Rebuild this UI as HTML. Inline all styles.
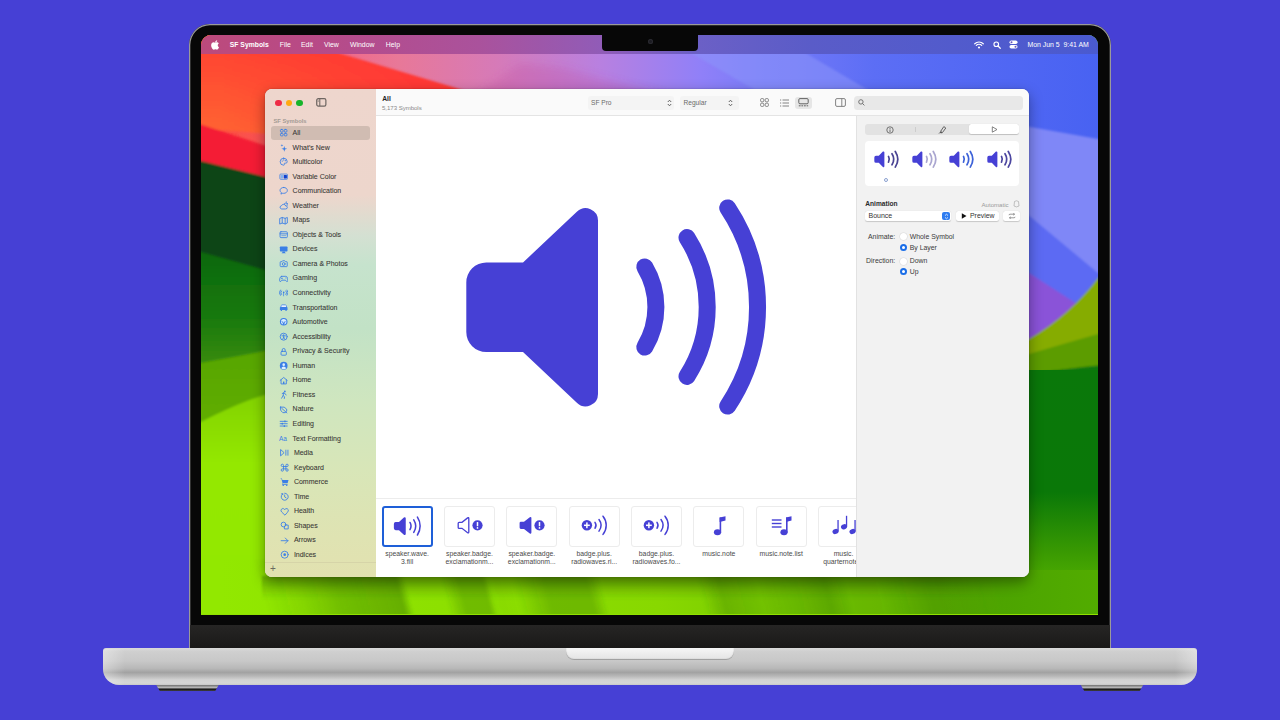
<!DOCTYPE html>
<html><head><meta charset="utf-8">
<style>
*{box-sizing:border-box;margin:0;padding:0}
html,body{width:1280px;height:720px;overflow:hidden}
body{background:#4640d5;position:relative;font-family:"Liberation Sans",sans-serif}
.abs{position:absolute}
#lid{left:189px;top:23.8px;width:922px;height:625.2px;border-radius:21px 21px 0 0;background:#070707;box-shadow:inset 0 0 0 1.3px #9a9a9a}
#screen{left:201px;top:35.4px;width:897px;height:579.2px;border-radius:10px 10px 0 0;overflow:hidden;background:#8fe000}
#chin{left:190px;top:625.4px;width:920px;height:22.6px;background:linear-gradient(#262524,#1a1918)}
#notch{left:602px;top:35px;width:96px;height:16px;background:#070707;border-radius:0 0 4px 4px}
#base{left:103px;top:648px;width:1094px;height:37px;border-radius:3px 3px 16px 16px;
 background:linear-gradient(#dadada 0%,#cfcfcf 10%,#c8c8c8 35%,#b8b8b8 55%,#a2a2a2 66%,#b8b8b8 76%,#d2d2d2 86%,#d6d6d6 95%,#c8c8c8 100%)}
#cut{left:566px;top:648px;width:168px;height:12px;border-radius:0 0 8px 8px;background:linear-gradient(#f6f6f6,#e3e3e3);box-shadow:inset 0 -1px 1px #9a9a9a}
.foot{top:684.6px;width:63px;height:6.3px;clip-path:polygon(0 0,100% 0,94% 100%,6% 100%);background:linear-gradient(#707070 0%,#9a9a9a 25%,#bdbdbd 40%,#6a6a6a 55%,#1c1c1c 75%,#2a2a2a 90%,#777 100%)}
#menubar{left:0;top:0;width:897px;height:18px;color:#fff;font-size:7.2px}
#win{left:64px;top:54px;width:764px;height:488px;border-radius:7px;overflow:hidden;background:#fff;box-shadow:0 5px 14px rgba(0,0,0,.38),0 0 1.5px rgba(0,0,0,.3)}

#win *{position:absolute}
#side{left:0;top:0;width:111px;height:488px;background:linear-gradient(180deg,#eed6cd 0%,#edd6cc 21.7%,#d4e0d2 30%,#c6e3cd 36%,#c2e2c6 49%,#cfe6bf 64%,#d8e6b8 78%,#dfe3b2 92%,#e2e1b0 100%)}
.tl{top:10.4px;width:6.6px;height:6.6px;border-radius:50%}
.si{left:0;width:111px;height:12px;font-size:7px;color:#3a3836;-webkit-text-stroke:0.08px #3a3836;line-height:12px;white-space:nowrap}
#tb{left:111px;top:0;width:653px;height:27px;background:#fafafa;border-bottom:1px solid #e4e4e4}
#main{left:111px;top:27px;width:480px;height:461px;background:#fff}
#insp{left:591px;top:27px;width:173px;height:461px;background:#f2f2f2;border-left:1px solid #e2e2e2}
.tile{top:7px;width:51px;height:40.6px;border:1px solid #ececec;border-radius:3px;background:#fff}
.lbl{top:50.5px;width:62px;font-size:6.85px;line-height:8.5px;color:#4a4a4a;text-align:center;white-space:nowrap}
</style></head>
<body>
<svg width="0" height="0" style="position:absolute"><defs>
<symbol id="spk" viewBox="460 195 315 222">
<path d="M466.3 282.5A20 20 0 0 1 486.3 262.5L523 262.5L577.1 211.6A12.4 12.4 0 0 1 598 220.6L598 393.9A12.4 12.4 0 0 1 577.1 402.9L523 352L486.3 352A20 20 0 0 1 466.3 332Z"/>
<g fill="none" stroke-linecap="round" stroke-width="17" stroke="currentColor">
<path d="M644.8 266.9A78 78 0 0 1 644.8 347.1"/>
<path d="M687 237.6A129.3 129.3 0 0 1 687 376.4"/>
<path d="M727.7 207.9A179.5 179.5 0 0 1 727.7 406.1"/>
</g></symbol>
<symbol id="spk2" viewBox="460 195 315 222">
<path d="M476 285A20 20 0 0 1 496 265L530 265L580 214A12.4 12.4 0 0 1 598 222.6L598 391.9A12.4 12.4 0 0 1 580 400.9L530 350L496 350A20 20 0 0 1 476 330Z"/>
<g fill="none" stroke-linecap="round" stroke-width="21" stroke="currentColor">
<path d="M648 272A72 72 0 0 1 648 342"/>
<path d="M690 240A125 125 0 0 1 690 374"/>
<path d="M730 212A175 175 0 0 1 730 402"/>
</g></symbol>
</defs></svg>
<div id="lid" class="abs"></div>
<div id="chin" class="abs"></div>
<div id="screen" class="abs">
  <svg class="abs" style="left:0;top:0" width="897" height="579" viewBox="201 35 897 579">
    <defs>
      <filter id="b6" x="-20%" y="-20%" width="140%" height="140%"><feGaussianBlur stdDeviation="6"/></filter>
    </defs>
    <defs>
      <linearGradient id="sky" x1="201" y1="0" x2="1098" y2="0" gradientUnits="userSpaceOnUse">
        <stop offset="0" stop-color="#ff4a32"/>
        <stop offset="0.15" stop-color="#f06888"/>
        <stop offset="0.22" stop-color="#e87898"/>
        <stop offset="0.33" stop-color="#d67ab8"/>
        <stop offset="0.445" stop-color="#b880e0"/>
        <stop offset="0.557" stop-color="#9080f8"/>
        <stop offset="0.62" stop-color="#7a7cf8"/>
        <stop offset="0.75" stop-color="#5c6ef5"/>
        <stop offset="1" stop-color="#4862f2"/>
      </linearGradient>
      <linearGradient id="orange" x1="0" y1="35" x2="0" y2="150" gradientUnits="userSpaceOnUse">
        <stop offset="0" stop-color="#ff3f32"/>
        <stop offset="1" stop-color="#ff6a30"/>
      </linearGradient>
      <linearGradient id="leftgreen" x1="0" y1="160" x2="0" y2="614" gradientUnits="userSpaceOnUse">
        <stop offset="0" stop-color="#0a4616"/>
        <stop offset="0.2" stop-color="#0b4a12"/>
        <stop offset="0.21" stop-color="#0a6c0c"/>
        <stop offset="0.38" stop-color="#2a8608"/>
        <stop offset="0.45" stop-color="#4a9c04"/>
        <stop offset="0.58" stop-color="#66b800"/>
        <stop offset="0.62" stop-color="#8ade00"/>
        <stop offset="1" stop-color="#94ea00"/>
      </linearGradient>
      <linearGradient id="lg2" x1="0" y1="252" x2="0" y2="365" gradientUnits="userSpaceOnUse">
        <stop offset="0" stop-color="#0a680c"/>
        <stop offset="0.6" stop-color="#1a7a0a"/>
        <stop offset="1" stop-color="#3a8c08"/>
      </linearGradient>
      <linearGradient id="lg3" x1="0" y1="355" x2="0" y2="425" gradientUnits="userSpaceOnUse">
        <stop offset="0" stop-color="#58a604"/>
        <stop offset="1" stop-color="#60ae00"/>
      </linearGradient>
      <linearGradient id="lg4" x1="0" y1="400" x2="0" y2="614" gradientUnits="userSpaceOnUse">
        <stop offset="0" stop-color="#84d400"/>
        <stop offset="0.3" stop-color="#94e800"/>
        <stop offset="1" stop-color="#92e800"/>
      </linearGradient>
      <linearGradient id="rfade" x1="940" y1="0" x2="1100" y2="0" gradientUnits="userSpaceOnUse">
        <stop offset="0" stop-color="#4ea600" stop-opacity="0"/>
        <stop offset="0.55" stop-color="#4ea600" stop-opacity="1"/>
        <stop offset="1" stop-color="#52ac00" stop-opacity="1"/>
      </linearGradient>
      <linearGradient id="redov" x1="220" y1="0" x2="420" y2="0" gradientUnits="userSpaceOnUse">
        <stop offset="0" stop-color="#ff3034" stop-opacity="0"/>
        <stop offset="1" stop-color="#ff3038" stop-opacity="0.75"/>
      </linearGradient>
      <linearGradient id="rightgreen" x1="0" y1="370" x2="0" y2="614" gradientUnits="userSpaceOnUse">
        <stop offset="0" stop-color="#0a780a"/>
        <stop offset="0.5" stop-color="#0a7808"/>
        <stop offset="0.75" stop-color="#3a9a02"/>
        <stop offset="1" stop-color="#62c000"/>
      </linearGradient>
      <linearGradient id="botgreen" x1="0" y1="0" x2="1098" y2="0" gradientUnits="userSpaceOnUse">
        <stop offset="0.2" stop-color="#92e800"/>
        <stop offset="0.6" stop-color="#88d800"/>
        <stop offset="0.8" stop-color="#6cc000"/>
        <stop offset="0.937" stop-color="#50aa00"/>
        <stop offset="1" stop-color="#50a800"/>
      </linearGradient>
      <filter id="b1" x="-10%" y="-10%" width="120%" height="120%"><feGaussianBlur stdDeviation="1"/></filter>
      <filter id="b4" x="-10%" y="-10%" width="120%" height="120%"><feGaussianBlur stdDeviation="5"/></filter>
    </defs>
    <rect x="201" y="35" width="897" height="579" fill="url(#botgreen)"/>
    <rect x="201" y="35" width="897" height="300" fill="url(#sky)"/>
    <g filter="url(#b1)">
      <polygon points="660,35 775,35 885,100 772,100" fill="#8a94fa" opacity="0.55"/>
      <polygon points="470,100 520,64 560,68 680,100" fill="#c04898" opacity="0.25" filter="url(#b4)"/>
      <polygon points="150,20 277,20 341,53.7 455,87.7 700,170 150,124" fill="url(#orange)"/>
      <polygon points="150,20 277,20 341,53.7 455,87.7 700,170 150,170" fill="url(#redov)"/>
      <polygon points="150,115 201,124.4 265,145.6 500,220 500,260 150,150" fill="#f41c36"/>
      <polygon points="150,150 201,161 265,176.7 600,260 600,700 150,700" fill="#0a4414"/>
      <polygon points="150,238 201,252 265,270 600,364 600,700 150,700" fill="url(#lg2)"/>
      <polygon points="150,372 201,363 265,351 400,330 400,700 150,700" fill="url(#lg3)"/>
      <path d="M150,440 L201,422 Q240,402 265,395 L400,360 L400,700 L150,700 Z" fill="url(#lg4)"/>
      <!-- right side -->
      <polygon points="960,100 1029,126.7 1098,138.9 1120,140 1120,700 960,700" fill="#7f87f7"/>
      <polygon points="960,190 1029,215.6 1098,273 1120,290 1120,700 960,700" fill="#5b6af3"/>
      <polygon points="960,240 1029,273 1077,304 1120,330 1120,700 960,700" fill="#8a52d8"/>
      <path d="M960,360 L1029,339 Q1070,315 1098,278 L1120,250 L1120,700 L960,700 Z" fill="#86ac04"/>
      <path d="M960,362 L1029,354 Q1070,342 1098,334 L1120,330 L1120,700 L960,700 Z" fill="#5c9c02"/>
      <path d="M960,380 L1029,374 Q1070,368 1098,365.5 L1120,365 L1120,700 L960,700 Z" fill="url(#rightgreen)"/>
    </g>
    <rect x="150" y="560" width="880" height="60" fill="url(#botgreen)"/>
    <defs><linearGradient id="streaks" x1="150" y1="0" x2="1150" y2="0" gradientUnits="userSpaceOnUse" gradientTransform="translate(-159,0) skewX(15)">
        <stop offset="0.0510" stop-color="#2f6a00" stop-opacity="0"/>
        <stop offset="0.1120" stop-color="#2f6a00" stop-opacity="0"/>
        <stop offset="0.1500" stop-color="#2f6a00" stop-opacity="0.12"/>
        <stop offset="0.1870" stop-color="#2f6a00" stop-opacity="0.3"/>
        <stop offset="0.2500" stop-color="#2f6a00" stop-opacity="0.42"/>
        <stop offset="0.2590" stop-color="#2f6a00" stop-opacity="0"/>
        <stop offset="0.2940" stop-color="#2f6a00" stop-opacity="0"/>
        <stop offset="0.3120" stop-color="#2f6a00" stop-opacity="0.3"/>
        <stop offset="0.3360" stop-color="#2f6a00" stop-opacity="0.3"/>
        <stop offset="0.3420" stop-color="#2f6a00" stop-opacity="0.02"/>
        <stop offset="0.3650" stop-color="#2f6a00" stop-opacity="0"/>
        <stop offset="0.3980" stop-color="#2f6a00" stop-opacity="0.3"/>
        <stop offset="0.4400" stop-color="#2f6a00" stop-opacity="0.3"/>
        <stop offset="0.4540" stop-color="#2f6a00" stop-opacity="0"/>
        <stop offset="0.5500" stop-color="#2f6a00" stop-opacity="0"/>
        <stop offset="0.5720" stop-color="#2f6a00" stop-opacity="0.28"/>
        <stop offset="0.6100" stop-color="#2f6a00" stop-opacity="0.12"/>
        <stop offset="0.6500" stop-color="#2f6a00" stop-opacity="0.2"/>
        <stop offset="0.6780" stop-color="#2f6a00" stop-opacity="0.32"/>
        <stop offset="0.7000" stop-color="#2f6a00" stop-opacity="0.1"/>
        <stop offset="0.7300" stop-color="#2f6a00" stop-opacity="0.1"/>
        <stop offset="0.7800" stop-color="#2f6a00" stop-opacity="0.3"/>
        <stop offset="0.8500" stop-color="#2f6a00" stop-opacity="0.2"/>
        <stop offset="0.9480" stop-color="#2f6a00" stop-opacity="0.2"/>
      </linearGradient>
      <linearGradient id="shadowtop" x1="0" y1="576" x2="0" y2="600" gradientUnits="userSpaceOnUse">
        <stop offset="0" stop-color="#2a5a00" stop-opacity="0.35"/>
        <stop offset="1" stop-color="#2a5a00" stop-opacity="0"/>
      </linearGradient></defs>
    <rect x="201" y="560" width="897" height="60" fill="url(#streaks)" filter="url(#b1)"/>
    <rect x="262" y="576" width="770" height="30" fill="url(#shadowtop)" filter="url(#b1)"/>
    <rect x="1029" y="370" width="69" height="244" fill="url(#rightgreen)"/>
    <rect x="940" y="570" width="160" height="50" fill="url(#rfade)"/>
  </svg>
  <div id="menubar" class="abs">
  <div class="abs" style="left:0;top:0;width:897px;height:18.5px;background:linear-gradient(90deg,#bc4a7c 0%,#b84a86 12%,#aa529c 31%,#905cb8 45%,#6c60c6 55%,#5a5cc8 68%,#4a5ad0 100%)"></div>
  <svg class="abs" style="left:10px;top:4.5px" width="9" height="10" viewBox="0 0 170 200"><path fill="#fff" d="M150 68c-1 1-20 12-20 36 0 28 25 38 26 38 0 1-4 14-13 27-8 12-17 24-30 24s-17-8-32-8c-15 0-20 8-32 8s-21-11-30-24C7 154-2 128-2 104c0-38 25-58 49-58 13 0 24 9 32 9 8 0 20-9 35-9 6 0 26 1 36 22zM108 34c6-7 11-17 11-27 0-1 0-3-1-4-10 0-21 7-28 15-6 6-11 16-11 26 0 2 0 3 1 4 1 0 2 0 3 0 9 0 19-6 25-14z"/></svg>
  <div class="abs" style="left:28.8px;top:6px;font-size:6.8px;font-weight:bold;white-space:nowrap;letter-spacing:0">SF Symbols</div>
  <div class="abs" style="left:78.7px;top:6px;font-size:6.9px;white-space:nowrap">File</div>
  <div class="abs" style="left:100px;top:6px;font-size:6.9px;white-space:nowrap">Edit</div>
  <div class="abs" style="left:123px;top:6px;font-size:6.9px;white-space:nowrap">View</div>
  <div class="abs" style="left:149px;top:6px;font-size:6.9px;white-space:nowrap">Window</div>
  <div class="abs" style="left:184.8px;top:6px;font-size:6.9px;white-space:nowrap">Help</div>
  <svg class="abs" style="left:773px;top:5.5px" width="10" height="8" viewBox="0 0 20 16"><path d="M1.5 5.5 A12 12 0 0 1 18.5 5.5" stroke="#fff" stroke-width="2.4" fill="none" stroke-linecap="round"/><path d="M4.6 8.8 A7.5 7.5 0 0 1 15.4 8.8" stroke="#fff" stroke-width="2.4" fill="none" stroke-linecap="round"/><circle cx="10" cy="13" r="2.2" fill="#fff"/></svg>
  <svg class="abs" style="left:792px;top:5.5px" width="8" height="8" viewBox="0 0 16 16"><circle cx="6.5" cy="6.5" r="4.6" stroke="#fff" stroke-width="2.2" fill="none"/><line x1="10" y1="10" x2="14.5" y2="14.5" stroke="#fff" stroke-width="2.4" stroke-linecap="round"/></svg>
  <svg class="abs" style="left:808px;top:5px" width="9" height="9" viewBox="0 0 18 18"><rect x="1" y="1" width="16" height="7" rx="3.5" fill="#fff"/><rect x="1" y="10" width="16" height="7" rx="3.5" fill="#fff"/><circle cx="5" cy="4.5" r="2" fill="#6a58c0"/><circle cx="13" cy="13.5" r="2" fill="#6a58c0"/></svg>
  <div class="abs" style="left:826.5px;top:6px;font-size:6.9px;white-space:nowrap">Mon Jun 5&nbsp; 9:41 AM</div>
</div>
  <div id="win" class="abs">
<div id="side">
  <div class="tl" style="left:10.1px;background:#ee2c46"></div>
  <div class="tl" style="left:20.9px;background:#ffa910"></div>
  <div class="tl" style="left:31.2px;background:#16b42a"></div>
  <svg style="left:51px;top:9px" width="10.6" height="8.8" viewBox="0 0 12 10"><rect x="0.8" y="0.8" width="10.4" height="8.4" rx="1.8" fill="none" stroke="#6e6662" stroke-width="1.4"/><line x1="4.3" y1="0.8" x2="4.3" y2="9.2" stroke="#6e6662" stroke-width="1.2"/><line x1="1.8" y1="2.6" x2="3.2" y2="2.6" stroke="#7a7470" stroke-width="0.7"/><line x1="1.8" y1="4" x2="3.2" y2="4" stroke="#7a7470" stroke-width="0.7"/></svg>
  <div style="left:8.4px;top:28.8px;font-size:5.8px;color:#a39a94;font-weight:bold;white-space:nowrap">SF Symbols</div>
  <div style="left:5.5px;top:37px;width:99.5px;height:13.6px;border-radius:3px;background:#d0bcb2"></div>
  <div class="si" style="top:37.60px"><svg style="left:13.8px;top:1.3px" width="9.4" height="9.4" viewBox="0 0 16 16"><g fill="none" stroke="#3b7fe6" stroke-width="1.5" stroke-linecap="round" stroke-linejoin="round"><rect x="2.5" y="2.5" width="4.5" height="4.5" rx="1.5"/><rect x="9" y="2.5" width="4.5" height="4.5" rx="1.5"/><rect x="2.5" y="9" width="4.5" height="4.5" rx="1.5"/><rect x="9" y="9" width="4.5" height="4.5" rx="1.5"/></g></svg><span style="left:27.6px">All</span></div>
  <div class="si" style="top:52.15px"><svg style="left:13.8px;top:1.3px" width="9.4" height="9.4" viewBox="0 0 16 16"><path fill="#3b7fe6" d="M9 5L10.2 8.8L14 10L10.2 11.2L9 15L7.8 11.2L4 10L7.8 8.8Z"/><path fill="#3b7fe6" d="M5 1.5L5.6 3.4L7.5 4L5.6 4.6L5 6.5L4.4 4.6L2.5 4L4.4 3.4Z"/></svg><span style="left:27.6px">What's New</span></div>
  <div class="si" style="top:66.70px"><svg style="left:13.8px;top:1.3px" width="9.4" height="9.4" viewBox="0 0 16 16"><g fill="none" stroke="#3b7fe6" stroke-width="1.5" stroke-linecap="round" stroke-linejoin="round"><path d="M8 2A6 6 0 1 0 8 14C9.2 14 9.5 13 9 12.2C8.5 11.4 9 10.5 10 10.5L11.5 10.5A2.5 2.5 0 0 0 14 8A6 6 0 0 0 8 2Z"/></g><circle cx="5.5" cy="7" r="1" fill="#3b7fe6"/><circle cx="8" cy="5" r="1" fill="#3b7fe6"/><circle cx="10.8" cy="6.2" r="1" fill="#3b7fe6"/></svg><span style="left:27.6px">Multicolor</span></div>
  <div class="si" style="top:81.25px"><svg style="left:13.8px;top:1.3px" width="9.4" height="9.4" viewBox="0 0 16 16"><rect x="1.5" y="3.5" width="13" height="9" rx="1.5" fill="none" stroke="#3b7fe6" stroke-width="1.3"/><rect x="8" y="5" width="5.5" height="6" rx="0.8" fill="#1040d0"/><rect x="3" y="5" width="4" height="6" rx="0.8" fill="#7fb0f0"/></svg><span style="left:27.6px">Variable Color</span></div>
  <div class="si" style="top:95.80px"><svg style="left:13.8px;top:1.3px" width="9.4" height="9.4" viewBox="0 0 16 16"><path fill="none" stroke="#3b7fe6" stroke-width="1.5" stroke-linecap="round" stroke-linejoin="round" d="M8 2.5C4.4 2.5 1.8 4.6 1.8 7.5C1.8 9.1 2.7 10.5 4.1 11.4L3.3 13.8L6.3 12.3C6.9 12.5 7.4 12.5 8 12.5C11.6 12.5 14.2 10.4 14.2 7.5C14.2 4.6 11.6 2.5 8 2.5Z"/></svg><span style="left:27.6px">Communication</span></div>
  <div class="si" style="top:110.35px"><svg style="left:13.8px;top:1.3px" width="9.4" height="9.4" viewBox="0 0 16 16"><g fill="none" stroke="#3b7fe6" stroke-width="1.5" stroke-linecap="round" stroke-linejoin="round"><path d="M4 13.5A2.8 2.8 0 0 1 4.3 8A3.8 3.8 0 0 1 11.5 8.5A2.5 2.5 0 0 1 12 13.5Z"/><path d="M9.5 4.2A3 3 0 0 1 14 7.5"/><line x1="12.5" y1="1.5" x2="12.5" y2="2.5"/><line x1="15" y1="4" x2="14.2" y2="4.6"/></g></svg><span style="left:27.6px">Weather</span></div>
  <div class="si" style="top:124.90px"><svg style="left:13.8px;top:1.3px" width="9.4" height="9.4" viewBox="0 0 16 16"><path fill="none" stroke="#3b7fe6" stroke-width="1.5" stroke-linecap="round" stroke-linejoin="round" d="M1.8 4L5.5 2.5L10.5 4L14.2 2.5L14.2 12L10.5 13.5L5.5 12L1.8 13.5Z M5.5 2.5L5.5 12 M10.5 4L10.5 13.5"/></svg><span style="left:27.6px">Maps</span></div>
  <div class="si" style="top:139.45px"><svg style="left:13.8px;top:1.3px" width="9.4" height="9.4" viewBox="0 0 16 16"><g fill="none" stroke="#3b7fe6" stroke-width="1.5" stroke-linecap="round" stroke-linejoin="round"><rect x="1.8" y="3" width="12.4" height="10" rx="1.5"/><line x1="1.8" y1="6.5" x2="14.2" y2="6.5"/></g><rect x="4" y="8.5" width="8" height="2" fill="#3b7fe6" opacity="0.5"/></svg><span style="left:27.6px">Objects &amp; Tools</span></div>
  <div class="si" style="top:154.00px"><svg style="left:13.8px;top:1.3px" width="9.4" height="9.4" viewBox="0 0 16 16"><rect x="1.5" y="2.5" width="13" height="8.5" rx="1.2" fill="#3b7fe6"/><path fill="#3b7fe6" d="M6 11L10 11L10.5 13.5L5.5 13.5Z"/><rect x="4.5" y="13" width="7" height="1.2" rx="0.5" fill="#3b7fe6"/></svg><span style="left:27.6px">Devices</span></div>
  <div class="si" style="top:168.55px"><svg style="left:13.8px;top:1.3px" width="9.4" height="9.4" viewBox="0 0 16 16"><g fill="none" stroke="#3b7fe6" stroke-width="1.5" stroke-linecap="round" stroke-linejoin="round"><path d="M2 5.5Q2 4.5 3 4.5L5 4.5L6.2 3L9.8 3L11 4.5L13 4.5Q14 4.5 14 5.5L14 12Q14 13 13 13L3 13Q2 13 2 12Z"/><circle cx="8" cy="8.5" r="2.4"/></g></svg><span style="left:27.6px">Camera &amp; Photos</span></div>
  <div class="si" style="top:183.10px"><svg style="left:13.8px;top:1.3px" width="9.4" height="9.4" viewBox="0 0 16 16"><g fill="none" stroke="#3b7fe6" stroke-width="1.5" stroke-linecap="round" stroke-linejoin="round"><path d="M4.5 4L11.5 4Q14 4 14.6 7.5L15 11Q15 13.2 13 12.8L11 10.5L5 10.5L3 12.8Q1 13.2 1 11L1.4 7.5Q2 4 4.5 4Z"/></g><rect x="3.5" y="6.8" width="3" height="1" fill="#3b7fe6"/><rect x="4.5" y="5.8" width="1" height="3" fill="#3b7fe6"/><circle cx="11" cy="6.5" r="0.7" fill="#3b7fe6"/><circle cx="12" cy="8" r="0.7" fill="#3b7fe6"/></svg><span style="left:27.6px">Gaming</span></div>
  <div class="si" style="top:197.65px"><svg style="left:13.8px;top:1.3px" width="9.4" height="9.4" viewBox="0 0 16 16"><g fill="none" stroke="#3b7fe6" stroke-width="1.5" stroke-linecap="round" stroke-linejoin="round"><path d="M4.2 5A4.5 4.5 0 0 0 4.2 11"/><path d="M11.8 5A4.5 4.5 0 0 1 11.8 11"/><path d="M2.3 3.5A7 7 0 0 0 2.3 12.5"/><path d="M13.7 3.5A7 7 0 0 1 13.7 12.5"/></g><circle cx="8" cy="7.5" r="1.4" fill="#3b7fe6"/><rect x="7.4" y="8" width="1.2" height="6" fill="#3b7fe6"/></svg><span style="left:27.6px">Connectivity</span></div>
  <div class="si" style="top:212.20px"><svg style="left:13.8px;top:1.3px" width="9.4" height="9.4" viewBox="0 0 16 16"><path fill="#3b7fe6" d="M3.5 4Q4 2.5 5.5 2.5L10.5 2.5Q12 2.5 12.5 4L13.5 7L14.5 7.5L14.5 12L13 12L13 13.5L11 13.5L11 12L5 12L5 13.5L3 13.5L3 12L1.5 12L1.5 7.5L2.5 7Z"/><rect x="4" y="4" width="8" height="3" rx="0.5" fill="#e8f0ff"/></svg><span style="left:27.6px">Transportation</span></div>
  <div class="si" style="top:226.75px"><svg style="left:13.8px;top:1.3px" width="9.4" height="9.4" viewBox="0 0 16 16"><circle cx="8" cy="8" r="6.5" fill="#3b7fe6"/><circle cx="8" cy="8" r="4.6" fill="#d8ecff"/><path fill="#3b7fe6" d="M3.5 7.5L12.5 7.5L10 9.5L8.7 13.5L7.3 13.5L6 9.5Z"/><circle cx="8" cy="8.3" r="1.3" fill="#d8ecff"/></svg><span style="left:27.6px">Automotive</span></div>
  <div class="si" style="top:241.30px"><svg style="left:13.8px;top:1.3px" width="9.4" height="9.4" viewBox="0 0 16 16"><circle cx="8" cy="8" r="6" fill="none" stroke="#3b7fe6" stroke-width="1.5" stroke-linecap="round" stroke-linejoin="round"/><circle cx="8" cy="4.8" r="1" fill="#3b7fe6"/><path fill="none" stroke="#3b7fe6" stroke-width="1.5" stroke-linecap="round" stroke-linejoin="round" d="M5 6.5L11 6.5M8 6.5L8 9M8 9L6.5 12M8 9L9.5 12" stroke-width="1.2"/></svg><span style="left:27.6px">Accessibility</span></div>
  <div class="si" style="top:255.85px"><svg style="left:13.8px;top:1.3px" width="9.4" height="9.4" viewBox="0 0 16 16"><g fill="none" stroke="#3b7fe6" stroke-width="1.5" stroke-linecap="round" stroke-linejoin="round"><rect x="3.5" y="7.5" width="9" height="6.5" rx="1.5"/><path d="M5.5 7.5L5.5 5A2.5 2.5 0 0 1 10.5 5L10.5 7.5"/></g></svg><span style="left:27.6px">Privacy &amp; Security</span></div>
  <div class="si" style="top:270.40px"><svg style="left:13.8px;top:1.3px" width="9.4" height="9.4" viewBox="0 0 16 16"><circle cx="8" cy="8" r="6.6" fill="#3b7fe6"/><circle cx="8" cy="6.2" r="2.2" fill="#e0f0ff"/><path fill="#e0f0ff" d="M3.8 12.2Q5 9.5 8 9.5Q11 9.5 12.2 12.2Q10.5 13.8 8 13.8Q5.5 13.8 3.8 12.2Z"/></svg><span style="left:27.6px">Human</span></div>
  <div class="si" style="top:284.95px"><svg style="left:13.8px;top:1.3px" width="9.4" height="9.4" viewBox="0 0 16 16"><path fill="none" stroke="#3b7fe6" stroke-width="1.5" stroke-linecap="round" stroke-linejoin="round" d="M2 7.5L8 2.5L14 7.5 M3.5 6.5L3.5 13.5L12.5 13.5L12.5 6.5"/><rect x="6.8" y="9.5" width="2.4" height="4" fill="#3b7fe6"/></svg><span style="left:27.6px">Home</span></div>
  <div class="si" style="top:299.50px"><svg style="left:13.8px;top:1.3px" width="9.4" height="9.4" viewBox="0 0 16 16"><circle cx="10" cy="2.5" r="1.5" fill="#3b7fe6"/><path fill="none" stroke="#3b7fe6" stroke-width="1.5" stroke-linecap="round" stroke-linejoin="round" stroke-width="1.7" d="M5.5 6L8 4.8L10.5 6.2L12 8.5 M8 4.8L7 9.5L9.5 11.5L9 14.5 M7 9.5L4.5 14"/></svg><span style="left:27.6px">Fitness</span></div>
  <div class="si" style="top:314.05px"><svg style="left:13.8px;top:1.3px" width="9.4" height="9.4" viewBox="0 0 16 16"><path fill="none" stroke="#3b7fe6" stroke-width="1.5" stroke-linecap="round" stroke-linejoin="round" d="M2.5 3.5Q10 2 13 7Q14.5 11 10.5 13Q6 14.5 3.5 10Q2 7 2.5 3.5Z M4.5 5.5L13.5 13.5"/></svg><span style="left:27.6px">Nature</span></div>
  <div class="si" style="top:328.60px"><svg style="left:13.8px;top:1.3px" width="9.4" height="9.4" viewBox="0 0 16 16"><g fill="none" stroke="#3b7fe6" stroke-width="1.5" stroke-linecap="round" stroke-linejoin="round"><line x1="2" y1="4" x2="14" y2="4"/><line x1="2" y1="8" x2="14" y2="8"/><line x1="2" y1="12" x2="14" y2="12"/></g><rect x="9" y="2.5" width="2.2" height="3" rx="0.6" fill="#3b7fe6"/><rect x="4.5" y="6.5" width="2.2" height="3" rx="0.6" fill="#3b7fe6"/><rect x="8" y="10.5" width="2.2" height="3" rx="0.6" fill="#3b7fe6"/></svg><span style="left:27.6px">Editing</span></div>
  <div class="si" style="top:343.15px"><svg style="left:13.8px;top:1.3px" width="9.4" height="9.4" viewBox="0 0 16 16"><text x="0" y="12.5" font-family="Liberation Sans" font-size="11" fill="#3b7fe6">Aa</text></svg><span style="left:27.6px">Text Formatting</span></div>
  <div class="si" style="top:357.70px"><svg style="left:14.8px;top:1.3px" width="9.4" height="9.4" viewBox="0 0 16 16"><path fill="none" stroke="#3b7fe6" stroke-width="1.5" stroke-linecap="round" stroke-linejoin="round" d="M1.5 3L7 8L1.5 13Z"/><line x1="10" y1="3" x2="10" y2="13" stroke="#3b7fe6" stroke-width="1.5"/><line x1="13.5" y1="3" x2="13.5" y2="13" stroke="#3b7fe6" stroke-width="1.5"/></svg><span style="left:28.9px">Media</span></div>
  <div class="si" style="top:372.25px"><svg style="left:14.8px;top:1.3px" width="9.4" height="9.4" viewBox="0 0 16 16"><path fill="none" stroke="#3b7fe6" stroke-width="1.5" stroke-linecap="round" stroke-linejoin="round" d="M6 6L6 4A2 2 0 1 0 4 6L12 6A2 2 0 1 0 10 4L10 12A2 2 0 1 0 12 10L4 10A2 2 0 1 0 6 12Z"/></svg><span style="left:28.9px">Keyboard</span></div>
  <div class="si" style="top:386.80px"><svg style="left:14.8px;top:1.3px" width="9.4" height="9.4" viewBox="0 0 16 16"><path fill="#3b7fe6" d="M1 2.5L3.3 2.5L4 5L14.5 5L13 10.5L5 10.5L4.4 12L13 12L13 13L3.5 13L4.3 10.2L2.5 3.5L1 3.5Z"/><circle cx="5.5" cy="14.3" r="1.2" fill="#3b7fe6"/><circle cx="11.5" cy="14.3" r="1.2" fill="#3b7fe6"/></svg><span style="left:28.9px">Commerce</span></div>
  <div class="si" style="top:401.35px"><svg style="left:14.8px;top:1.3px" width="9.4" height="9.4" viewBox="0 0 16 16"><g fill="none" stroke="#3b7fe6" stroke-width="1.5" stroke-linecap="round" stroke-linejoin="round"><path d="M3.5 4A6 6 0 1 0 8 2"/><path d="M8 5L8 8.5L10.5 10"/></g><path fill="#3b7fe6" d="M1.5 2L5.5 2L5.5 6Z"/></svg><span style="left:28.9px">Time</span></div>
  <div class="si" style="top:415.90px"><svg style="left:14.8px;top:1.3px" width="9.4" height="9.4" viewBox="0 0 16 16"><path fill="none" stroke="#3b7fe6" stroke-width="1.5" stroke-linecap="round" stroke-linejoin="round" d="M8 13.5L2.8 8.5Q1 6.5 2 4.5Q3.5 2 6 2.8Q7.3 3.3 8 4.5Q8.7 3.3 10 2.8Q12.5 2 14 4.5Q15 6.5 13.2 8.5Z"/></svg><span style="left:28.9px">Health</span></div>
  <div class="si" style="top:430.45px"><svg style="left:14.8px;top:1.3px" width="9.4" height="9.4" viewBox="0 0 16 16"><g fill="none" stroke="#3b7fe6" stroke-width="1.5" stroke-linecap="round" stroke-linejoin="round"><circle cx="6" cy="6" r="4"/><path d="M8.5 7L14 7L14 13.5L7.5 13.5L7.5 9.5"/></g></svg><span style="left:28.9px">Shapes</span></div>
  <div class="si" style="top:445.00px"><svg style="left:14.8px;top:1.3px" width="9.4" height="9.4" viewBox="0 0 16 16"><path fill="none" stroke="#3b7fe6" stroke-width="1.5" stroke-linecap="round" stroke-linejoin="round" stroke-width="1.6" d="M2 8L13.5 8M9 3.5L13.5 8L9 12.5"/></svg><span style="left:28.9px">Arrows</span></div>
  <div class="si" style="top:459.55px"><svg style="left:14.8px;top:1.3px" width="9.4" height="9.4" viewBox="0 0 16 16"><circle cx="8" cy="8" r="6" fill="none" stroke="#3b7fe6" stroke-width="1.5" stroke-linecap="round" stroke-linejoin="round"/><circle cx="8" cy="8" r="2.3" fill="#3b7fe6"/></svg><span style="left:28.9px">Indices</span></div>
  <div style="left:0;top:472.5px;width:111px;height:1px;background:#d6d4a8"></div>
  <div style="left:5px;top:475px;font-size:10px;color:#6a6a60;line-height:10px">+</div>
</div>
<div id="tb">
  <div style="left:6.2px;top:5.6px;font-size:6.7px;font-weight:bold;color:#222;white-space:nowrap">All</div>
  <div style="left:6px;top:14.6px;font-size:6.1px;color:#8a8a8a;white-space:nowrap;letter-spacing:-0.05px">5,173 Symbols</div>
  <div style="left:212px;top:6.6px;width:86px;height:14px;border-radius:3px;background:#f4f4f4"></div>
  <div style="left:215px;top:10px;font-size:6.6px;color:#6a6a6a;white-space:nowrap">SF Pro</div>
  <svg style="left:291px;top:9.5px" width="5" height="8" viewBox="0 0 5 8"><path d="M0.8 3L2.5 1.2L4.2 3M0.8 5L2.5 6.8L4.2 5" fill="none" stroke="#555" stroke-width="0.9"/></svg>
  <div style="left:303.6px;top:6.6px;width:59px;height:14px;border-radius:3px;background:#f4f4f4"></div>
  <div style="left:307.5px;top:10px;font-size:6.6px;color:#6a6a6a;white-space:nowrap">Regular</div>
  <svg style="left:351.5px;top:9.5px" width="5" height="8" viewBox="0 0 5 8"><path d="M0.8 3L2.5 1.2L4.2 3M0.8 5L2.5 6.8L4.2 5" fill="none" stroke="#555" stroke-width="0.9"/></svg>
  <svg style="left:384px;top:8.8px" width="9" height="9" viewBox="0 0 9 9" fill="none" stroke="#777" stroke-width="0.9"><rect x="0.6" y="0.6" width="3.2" height="3.2" rx="1"/><rect x="5.2" y="0.6" width="3.2" height="3.2" rx="1"/><rect x="0.6" y="5.2" width="3.2" height="3.2" rx="1"/><rect x="5.2" y="5.2" width="3.2" height="3.2" rx="1"/></svg>
  <svg style="left:403.5px;top:9.3px" width="9" height="8" viewBox="0 0 9 8" stroke="#777" stroke-width="0.9"><line x1="0" y1="1" x2="1.2" y2="1"/><line x1="2.5" y1="1" x2="9" y2="1"/><line x1="0" y1="4" x2="1.2" y2="4"/><line x1="2.5" y1="4" x2="9" y2="4"/><line x1="0" y1="7" x2="1.2" y2="7"/><line x1="2.5" y1="7" x2="9" y2="7"/></svg>
  <div style="left:419px;top:7.2px;width:16.5px;height:12.8px;border-radius:3px;background:#e6e6e6"></div>
  <svg style="left:422px;top:9px" width="11" height="9" viewBox="0 0 11 9" fill="none" stroke="#555" stroke-width="0.9"><rect x="0.8" y="0.6" width="9.4" height="5.2" rx="1.2"/><line x1="0.8" y1="7.8" x2="2.6" y2="7.8"/><line x1="3.4" y1="7.8" x2="5.2" y2="7.8"/><line x1="6" y1="7.8" x2="7.8" y2="7.8"/><line x1="8.6" y1="7.8" x2="10.2" y2="7.8"/></svg>
  <svg style="left:459px;top:8.8px" width="11" height="9" viewBox="0 0 11 9" fill="none" stroke="#777" stroke-width="0.9"><rect x="0.6" y="0.6" width="9.8" height="7.8" rx="1.4"/><line x1="6.8" y1="0.6" x2="6.8" y2="8.4"/></svg>
  <div style="left:477.7px;top:6.4px;width:169px;height:14.2px;border-radius:3.5px;background:#e8e8e8"></div>
  <svg style="left:481.5px;top:10px" width="7" height="7" viewBox="0 0 7 7" fill="none" stroke="#666" stroke-width="0.9"><circle cx="2.9" cy="2.9" r="2.2"/><line x1="4.5" y1="4.5" x2="6.4" y2="6.4"/></svg>
</div>
<div id="main">
  <svg style="left:84px;top:79px" width="315" height="222"><use href="#spk" color="#4640d5" fill="#4640d5"/></svg>
  <div id="grid" style="left:0;top:382px;width:480px;height:79px;border-top:1px solid #ececec;background:#fff;overflow:hidden">
  <div class="tile" style="left:5.60px;border:2.4px solid #1e5fd8;border-radius:3px;"><svg style="left:9.2px;top:7.6px" width="29" height="20"><use href="#spk" color="#4640d5" fill="#4640d5"/></svg></div>
  <div class="lbl" style="left:0.10px">speaker.wave.<br>3.fill</div>
  <div class="tile" style="left:67.95px;"><svg style="left:11px;top:8px" width="30" height="22" viewBox="0 0 30 22"><path d="M2.2 8.2Q2.2 7.3 3.1 7.3L6 7.3L11.6 2.9Q12.8 2.2 12.8 3.5L12.8 17.1Q12.8 18.4 11.6 17.7L6 13.3L3.1 13.3Q2.2 13.3 2.2 12.4Z" fill="none" stroke="#4640d5" stroke-width="1.3"/><circle cx="21.5" cy="10.3" r="5.1" fill="#4640d5"/><rect x="20.75" y="7" width="1.5" height="4.2" rx="0.5" fill="#fff"/><circle cx="21.5" cy="12.9" r="0.85" fill="#fff"/></svg></div>
  <div class="lbl" style="left:62.45px">speaker.badge.<br>exclamationm...</div>
  <div class="tile" style="left:130.30px;"><svg style="left:11px;top:8px" width="30" height="22" viewBox="0 0 30 22"><path d="M1.6 8Q1.6 6.7 2.9 6.7L6 6.7L11.8 2.2Q13.4 1.3 13.4 3L13.4 17.6Q13.4 19.3 11.8 18.4L6 13.9L2.9 13.9Q1.6 13.9 1.6 12.6Z" fill="#4640d5"/><circle cx="21.5" cy="10.3" r="5.1" fill="#4640d5"/><rect x="20.75" y="7" width="1.5" height="4.2" rx="0.5" fill="#fff"/><circle cx="21.5" cy="12.9" r="0.85" fill="#fff"/></svg></div>
  <div class="lbl" style="left:124.80px">speaker.badge.<br>exclamationm...</div>
  <div class="tile" style="left:192.65px;"><svg style="left:11px;top:8px" width="30" height="22" viewBox="0 0 30 22"><circle cx="5.9" cy="10.3" r="5.2" fill="#4640d5"/><rect x="3" y="9.55" width="5.8" height="1.5" fill="#fff"/><rect x="5.15" y="7.4" width="1.5" height="5.8" fill="#fff"/><g fill="none" stroke="#4640d5" stroke-width="1.5" stroke-linecap="round"><path d="M14 7.4A5 5 0 0 1 14 13.2"/><path d="M18 4.5A9.8 9.8 0 0 1 18 16.1"/><path d="M22 1.2A14.5 14.5 0 0 1 22 19.4"/></g></svg></div>
  <div class="lbl" style="left:187.15px">badge.plus.<br>radiowaves.ri...</div>
  <div class="tile" style="left:255.00px;"><svg style="left:11px;top:8px" width="30" height="22" viewBox="0 0 30 22"><circle cx="5.9" cy="10.3" r="5.2" fill="#4640d5"/><rect x="3" y="9.55" width="5.8" height="1.5" fill="#fff"/><rect x="5.15" y="7.4" width="1.5" height="5.8" fill="#fff"/><g fill="none" stroke="#4640d5" stroke-width="1.5" stroke-linecap="round"><path d="M14 7.4A5 5 0 0 1 14 13.2"/><path d="M18 4.5A9.8 9.8 0 0 1 18 16.1"/><path d="M22 1.2A14.5 14.5 0 0 1 22 19.4"/></g></svg></div>
  <div class="lbl" style="left:249.50px">badge.plus.<br>radiowaves.fo...</div>
  <div class="tile" style="left:317.35px;"><svg style="left:16px;top:8px" width="20" height="22" viewBox="0 0 20 22"><ellipse cx="7.5" cy="17.3" rx="3.6" ry="3" fill="#4640d5"/><rect x="9.6" y="2.5" width="1.6" height="15" fill="#4640d5"/><path d="M9.6 2.5L15.5 1.2L15.5 5.6L9.6 6.9Z" fill="#4640d5"/></svg></div>
  <div class="lbl" style="left:311.85px">music.note<br></div>
  <div class="tile" style="left:379.70px;"><svg style="left:13px;top:8px" width="26" height="22" viewBox="0 0 26 22"><g stroke="#4640d5" stroke-width="1.4"><line x1="1.8" y1="5" x2="11.5" y2="5"/><line x1="1.8" y1="8.5" x2="11.5" y2="8.5"/><line x1="1.8" y1="12" x2="11.5" y2="12"/></g><ellipse cx="14" cy="17.3" rx="3.6" ry="3" fill="#4640d5"/><rect x="16" y="2.5" width="1.6" height="15" fill="#4640d5"/><path d="M16 2.5L21.5 1.2L21.5 5.6L16 6.9Z" fill="#4640d5"/></svg></div>
  <div class="lbl" style="left:374.20px">music.note.list<br></div>
  <div class="tile" style="left:442.05px;"><svg style="left:12px;top:8px" width="30" height="22" viewBox="0 0 30 22"><g fill="#4640d5"><ellipse cx="4.5" cy="16.5" rx="3.1" ry="2.5" transform="rotate(-20 4.5 16.5)"/><rect x="6.4" y="5" width="1.3" height="11.5"/><ellipse cx="13" cy="11.8" rx="3.1" ry="2.5" transform="rotate(-20 13 11.8)"/><rect x="14.9" y="0.8" width="1.3" height="11"/><ellipse cx="21.5" cy="16.5" rx="3.1" ry="2.5" transform="rotate(-20 21.5 16.5)"/><rect x="23.4" y="5" width="1.3" height="11.5"/></g></svg></div>
  <div class="lbl" style="left:436.55px">music.<br>quarternote.3</div>
  </div>
</div>
<div id="insp">
  <div style="left:7.8px;top:7.4px;width:154.4px;height:11.2px;border-radius:3px;background:#e2e2e2"></div>
  <div style="left:111.7px;top:7.9px;width:50px;height:10.2px;border-radius:2.5px;background:#fff;box-shadow:0 0.5px 1px rgba(0,0,0,.15)"></div>
  <div style="left:57.8px;top:10.2px;width:0.7px;height:5.6px;background:#cdcdcd"></div>
  <svg style="left:29.0px;top:9.2px" width="8" height="8" viewBox="0 0 8 8"><circle cx="4" cy="4" r="3.2" fill="none" stroke="#555" stroke-width="0.8"/><rect x="3.6" y="3.4" width="0.8" height="2.6" fill="#555"/><circle cx="4" cy="2.4" r="0.5" fill="#555"/></svg>
  <svg style="left:81.0px;top:8.6px" width="9" height="9" viewBox="0 0 9 9"><path d="M2.6 6.4L5.8 1.6L7.8 3L4.4 7.6Z" fill="none" stroke="#555" stroke-width="0.9" stroke-linejoin="round"/><path d="M2.6 6.4L4.4 7.6L3.2 8.6L1.6 7.6Z" fill="#555"/><path d="M1.6 7.6L1 8.6" stroke="#555" stroke-width="0.8"/></svg>
  <svg style="left:133.5px;top:9.6px" width="7" height="7" viewBox="0 0 7 7"><path d="M1.3 0.8L6 3.5L1.3 6.2Z" fill="none" stroke="#666" stroke-width="0.8" stroke-linejoin="round"/></svg>
  <div style="left:8.3px;top:24.7px;width:154.2px;height:45.2px;border-radius:4px;background:#fff"></div>
  <svg style="left:16.0px;top:33.8px" width="26" height="18.4"><use href="#spk2" fill="#4640d5" color="#4a4494"/></svg>
  <svg style="left:53.6px;top:33.8px" width="26" height="18.4"><use href="#spk2" fill="#4640d5" color="#aaa6d0"/></svg>
  <svg style="left:91.2px;top:33.8px" width="26" height="18.4"><use href="#spk2" fill="#4640d5" color="#3d62d8"/></svg>
  <svg style="left:128.8px;top:33.8px" width="26" height="18.4"><use href="#spk2" fill="#4640d5" color="#4c46a0"/></svg>
  <div style="left:27.2px;top:61.8px;width:4.2px;height:4.2px;border-radius:50%;border:0.8px solid #8aa0d0"></div>
  <div style="left:8.3px;top:83.5px;font-size:6.6px;font-weight:bold;color:#2a2a2a;white-space:nowrap">Animation</div>
  <div style="left:124.5px;top:84.2px;font-size:6.1px;color:#9a9a9a;white-space:nowrap">Automatic</div>
  <svg style="left:155.5px;top:83.3px" width="7" height="8" viewBox="0 0 7 8"><path d="M1.5 1.5Q3.5 0 5.5 1.5L6 6Q3.5 7.8 1 6Z" fill="none" stroke="#aaa" stroke-width="0.7"/></svg>
  <div style="left:8.0px;top:94.9px;width:85.7px;height:9.6px;border-radius:2.5px;background:#fff;box-shadow:0 0.4px 1px rgba(0,0,0,.18)"></div>
  <div style="left:11.5px;top:95.6px;font-size:7px;color:#333;white-space:nowrap">Bounce</div>
  <div style="left:84.8px;top:95.5px;width:8.6px;height:8.6px;border-radius:2px;background:#2e7cf0"></div>
  <svg style="left:86.6px;top:96.5px" width="5" height="7" viewBox="0 0 5 7"><path d="M1 2.6L2.5 1.2L4 2.6M1 4.4L2.5 5.8L4 4.4" fill="none" stroke="#fff" stroke-width="0.8"/></svg>
  <div style="left:99.2px;top:94.9px;width:42.4px;height:9.6px;border-radius:2.5px;background:#fff;box-shadow:0 0.4px 1px rgba(0,0,0,.18)"></div>
  <svg style="left:103.5px;top:97.0px" width="6" height="6" viewBox="0 0 6 6"><path d="M0.8 0.3L5.5 3L0.8 5.7Z" fill="#111"/></svg>
  <div style="left:113.0px;top:95.6px;font-size:6.9px;color:#333;white-space:nowrap">Preview</div>
  <div style="left:146.3px;top:94.9px;width:16.4px;height:9.6px;border-radius:2.5px;background:#fff;box-shadow:0 0.4px 1px rgba(0,0,0,.18)"></div>
  <svg style="left:150.5px;top:96.8px" width="8" height="6" viewBox="0 0 8 6"><path d="M1 2.2Q1 1.2 2 1.2L6.5 1.2M5.3 0.2L6.5 1.2L5.3 2.2M7 3.8Q7 4.8 6 4.8L1.5 4.8M2.7 3.8L1.5 4.8L2.7 5.8" fill="none" stroke="#555" stroke-width="0.6"/></svg>
  <div style="left:0;top:116.6px;width:38.2px;text-align:right;font-size:6.9px;color:#3a3a3a;white-space:nowrap">Animate:</div>
  <div style="left:0;top:141.0px;width:38.2px;text-align:right;font-size:6.9px;color:#3a3a3a;white-space:nowrap">Direction:</div>
  <div style="left:42.8px;top:116.9px;width:7px;height:7px;border-radius:50%;background:#fff;box-shadow:0 0 0 0.5px #d8d8d8"></div>
  <div style="left:42.8px;top:127.5px;width:7px;height:7px;border-radius:50%;background:#fff;border:2.2px solid #1a6ee8"></div>
  <div style="left:42.8px;top:141.2px;width:7px;height:7px;border-radius:50%;background:#fff;box-shadow:0 0 0 0.5px #d8d8d8"></div>
  <div style="left:42.8px;top:151.5px;width:7px;height:7px;border-radius:50%;background:#fff;border:2.2px solid #1a6ee8"></div>
  <div style="left:52.7px;top:116.6px;font-size:6.9px;color:#3a3a3a;white-space:nowrap">Whole Symbol</div>
  <div style="left:52.7px;top:127.2px;font-size:6.9px;color:#3a3a3a;white-space:nowrap">By Layer</div>
  <div style="left:52.7px;top:141.0px;font-size:6.9px;color:#3a3a3a;white-space:nowrap">Down</div>
  <div style="left:52.7px;top:151.2px;font-size:6.9px;color:#3a3a3a;white-space:nowrap">Up</div>
</div>

</div>
</div>
<div id="notch" class="abs"><div class="abs" style="left:45.5px;top:3.5px;width:5px;height:5px;border-radius:50%;background:#1c1c22;box-shadow:inset 0 0 0 1px #2a2a30"></div></div>
<div id="base" class="abs"></div>
<div class="abs" style="left:103px;top:648.5px;width:22px;height:36.5px;border-radius:3px 0 0 16px;background:linear-gradient(90deg,rgba(255,255,255,.35),rgba(255,255,255,0))"></div>
<div class="abs" style="left:1175px;top:648.5px;width:22px;height:36.5px;border-radius:0 3px 16px 0;background:linear-gradient(270deg,rgba(255,255,255,.35),rgba(255,255,255,0))"></div>
<div id="cut" class="abs"></div>
<div class="foot abs" style="left:156px"></div>
<div class="foot abs" style="left:1080.5px"></div>
</body></html>
